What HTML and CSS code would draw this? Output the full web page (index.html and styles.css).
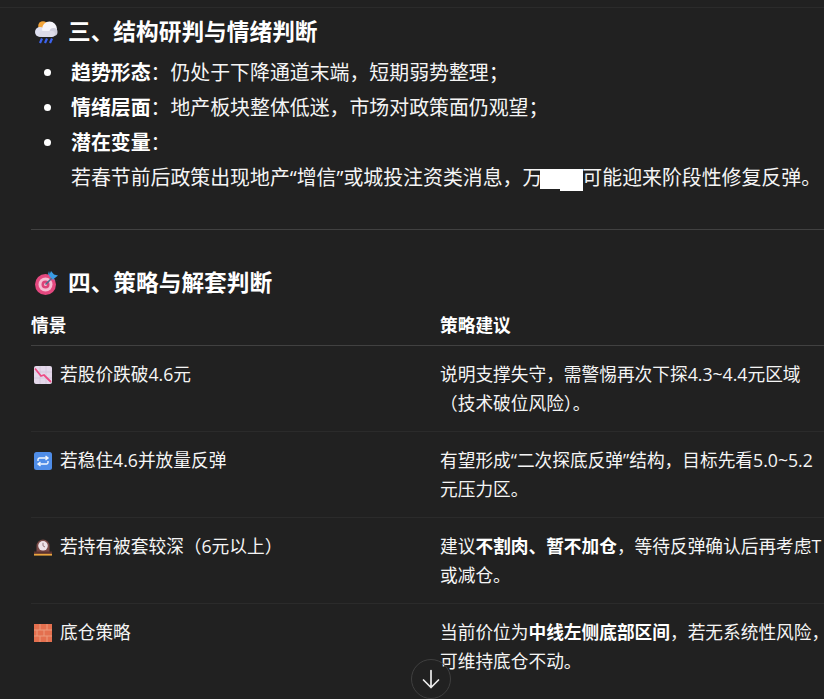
FILE: index.html
```html
<!DOCTYPE html>
<html lang="zh-CN">
<head>
<meta charset="utf-8">
<title>结构研判与策略</title>
<link rel="stylesheet" href="styles.css">
</head>
<body>
<main class="thread">
  <hr class="rule-top">
  <h3 class="section-title first">
    <svg class="emoji-title" viewBox="0 0 24 24"><circle cx="9" cy="6" r="4.800" fill="#f3a53a"/><circle cx="6" cy="12" r="5" fill="#dfe0f0"/><circle cx="15.500" cy="9" r="7.500" fill="#f6f5fb"/><circle cx="19.500" cy="12" r="4" fill="#cfcedd"/><rect x="5" y="11" width="16" height="6" rx="3" fill="#dddce9"/><path d="M8 18.500l-2 4.500M13 18.500l-2 4.500M18 18.500l-2 4.500" stroke="#3d63ee" stroke-width="2.200" fill="none"/></svg>
    <span>三、结构研判与情绪判断</span>
  </h3>
  <ul class="points">
    <li><strong>趋势形态</strong>：仍处于下降通道末端，短期弱势整理；</li>
    <li><strong>情绪层面</strong>：地产板块整体低迷，市场对政策面仍观望；</li>
    <li><strong>潜在变量</strong>：<br>若春节前后政策出现地产“增信”或城投注资类消息，万<span class="redact"><i></i><i></i></span>可能迎来阶段性修复反弹。</li>
  </ul>
  <hr class="rule">
  <h3 class="section-title second">
    <svg class="emoji-title" viewBox="0 0 24 24"><circle cx="11.500" cy="13.500" r="10.500" fill="#e4487f"/><circle cx="11.500" cy="13.500" r="7" fill="#f5bcd2"/><circle cx="11.500" cy="13.500" r="4" fill="#dc4379"/><circle cx="11.500" cy="13.500" r="1.500" fill="#f5bcd2"/><path d="M11.500 13.500L18 7" stroke="#4d6f8e" stroke-width="1.600"/><path d="M14 3.500l4 1.500 1.500 4 4.500 1-3-.5-5-5.500-1-4z" fill="#3a9ce4"/><path d="M15 5l2-5 3 3.500 4 1-5 4z" fill="#3a9ce4"/></svg>
    <span>四、策略与解套判断</span>
  </h3>
  <table class="plan">
    <thead>
      <tr><th>情景</th><th>策略建议</th></tr>
    </thead>
    <tbody>
      <tr>
        <td><span class="scene"><svg class="emoji" viewBox="0 0 18 18"><rect width="18" height="18" rx="2" fill="#e4d8ea"/><path d="M0 6h18M0 12h18M6 0v18M12 0v18" stroke="#d2c5da" stroke-width=".8"/><path d="M1 2.500l6 7.500 3-1 7 7" stroke="#ee4b85" stroke-width="1.800" fill="none"/></svg>若股价跌破4.6元</span></td>
        <td>说明支撑失守，需警惕再次下探4.3~4.4元区域（技术破位风险）。</td>
      </tr>
      <tr>
        <td><span class="scene"><svg class="emoji" viewBox="0 0 18 18"><rect width="18" height="18" rx="2.500" fill="#4f8de8"/><path d="M4 9V7.500A1.500 1.500 0 0 1 5.500 6H13M11.500 4L14 6l-2.500 2M14 9v1.500a1.500 1.500 0 0 1-1.500 1.500H5M6.500 10L4 12l2.500 2" stroke="#f2f6fd" stroke-width="1.400" fill="none"/></svg>若稳住4.6并放量反弹</span></td>
        <td>有望形成“二次探底反弹”结构，目标先看5.0~5.2元压力区。</td>
      </tr>
      <tr>
        <td><span class="scene"><svg class="emoji" viewBox="0 0 18 18"><path d="M2.500 15V8a6.500 6.500 0 0 1 13 0v7z" fill="#7a4a47"/><rect y="13.500" width="18" height="2.500" fill="#5c3230"/><rect y="15.800" width="18" height="1.800" fill="#eca63f"/><circle cx="9" cy="7.800" r="4.800" fill="#eee2e8"/><path d="M9 4.800v3l2 1.200" stroke="#8a6a70" stroke-width=".9" fill="none"/></svg>若持有被套较深（6元以上）</span></td>
        <td>建议<strong>不割肉、暂不加仓</strong>，等待反弹确认后再考虑T或减仓。</td>
      </tr>
      <tr>
        <td><span class="scene"><svg class="emoji" viewBox="0 0 18 18"><rect width="18" height="18" fill="#e4704f"/><path d="M0 6h18M0 12h18M6 0v6M13 0v6M3 6v6M10 6v6M6 12v6M13 12v6" stroke="#eb9a7c" stroke-width="1"/></svg>底仓策略</span></td>
        <td>当前价位为<strong>中线左侧底部区间</strong>，若无系统性风险，可维持底仓不动。</td>
      </tr>
    </tbody>
  </table>
</main>
<button class="scroll-down" type="button" aria-label="向下滚动">
  <svg viewBox="0 0 20 20"><path d="M10 1.500v17M2.500 11l7.500 7.500 7.500-7.500" stroke="#ececec" stroke-width="1.700" fill="none" stroke-linecap="round" stroke-linejoin="round"/></svg>
</button>
</body>
</html>
```

FILE: styles.css
```css
html, body {
  margin: 0;
  height: 699px;
  overflow: hidden;
  background: #212121;
}
body {
  position: relative;
  color: #f5f5f5;
  font-family: "Open Sans", "Noto Sans CJK SC", sans-serif;
  font-size: 17.7px;
}
.thread {
  padding: 7px 0 0 31px;
  width: 820px;
}
.rule-top {
  margin: 0 0 0 -31px;
  border: 0;
  border-top: 1px solid #2b2b2b;
}
.rule {
  margin: 34px 0 0;
  border: 0;
  border-top: 1px solid #414141;
}
.section-title {
  display: flex;
  align-items: center;
  gap: 10px;
  margin: 0;
  font-size: 22.7px;
  font-weight: 700;
  line-height: 32px;
  color: #fff;
}
.section-title.first { margin-top: 8px; }
.section-title.second { margin-top: 37px; }
.emoji-title {
  width: 24px;
  height: 24px;
  margin-left: 3px;
}
.points {
  list-style: none;
  margin: 7px 0 0;
  padding: 0 0 0 40px;
  font-size: 19.9px;
  line-height: 35px;
}
.points li { position: relative; }
.points li::before {
  content: "";
  position: absolute;
  left: -27px;
  top: 14px;
  width: 7px;
  height: 7px;
  border-radius: 50%;
  background: #fff;
}
.points strong { color: #fff; font-weight: 700; }
.redact {
  display: inline-flex;
  align-items: flex-start;
  vertical-align: -4px;
  margin-left: -2px;
  margin-right: -1px;
}
.redact i {
  display: block;
  width: 20px;
  height: 20px;
  background: #fff;
}
.redact i + i {
  width: 23px;
  height: 22px;
}
.plan {
  table-layout: fixed;
  width: 799px;
  margin-top: 9px;
  border-collapse: collapse;
  line-height: 29px;
}
.plan th {
  padding: 3px 0 5px;
  text-align: left;
  color: #fff;
  font-weight: 700;
  border-bottom: 1px solid #414141;
}
.plan th:first-child, .plan td:first-child { width: 409px; }
.plan td {
  height: 86px;
  padding: 14px 0 13px;
  box-sizing: border-box;
  vertical-align: top;
  border-bottom: 1px solid #2b2b2b;
}
.plan tbody tr:last-child td { border-bottom: 0; }
.plan strong { color: #fff; font-weight: 700; }
.scene {
  display: flex;
  align-items: center;
  gap: 8px;
}
.emoji {
  width: 18px;
  height: 18px;
  margin-left: 3px;
  flex: none;
}
.scroll-down {
  position: absolute;
  left: 411px;
  top: 659px;
  width: 40px;
  height: 40px;
  padding: 0;
  display: flex;
  align-items: center;
  justify-content: center;
  border: 1px solid #3f3f3f;
  border-radius: 50%;
  background: transparent;
}
.scroll-down svg { width: 20px; height: 20px; }
```
